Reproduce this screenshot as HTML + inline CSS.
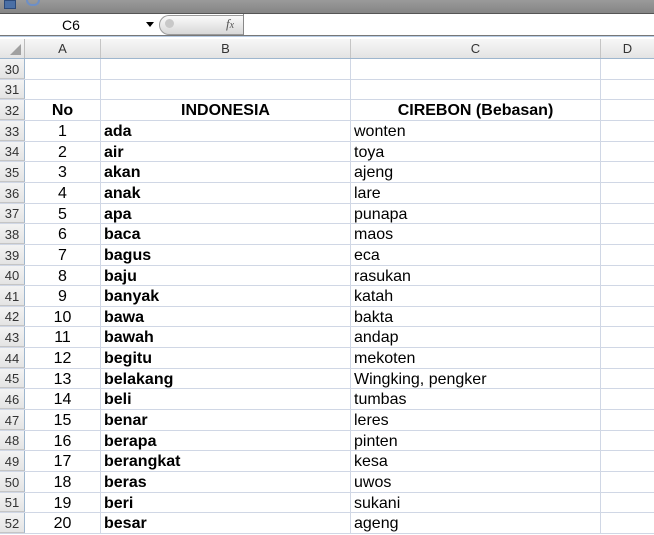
<!DOCTYPE html>
<html><head><style>
*{margin:0;padding:0;box-sizing:border-box}
body{width:654px;height:535px;overflow:hidden;background:#fff;position:relative;font-family:"Liberation Sans",Arial,sans-serif}
.abs{position:absolute}
.row{position:absolute;left:0;width:654px;border-bottom:1px solid #d0d7e5}
.rh{position:absolute;left:0;top:0;bottom:0;width:25px;background:linear-gradient(#f3f3f3,#e4e4e4);border-right:1px solid #9eb6ce;border-bottom:1px solid #c5c5c5;font-size:13px;color:#333;display:flex;align-items:center;justify-content:center;padding-top:1px}
.c{position:absolute;top:0;bottom:0;display:flex;align-items:center;font-size:16px;color:#000;border-right:1px solid #d0d7e5;white-space:nowrap;padding-top:2px}
.a{left:25px;width:76px;justify-content:center}
.b{left:101px;width:250px;padding-left:3px;font-weight:bold}
.cc{left:351px;width:250px;padding-left:3px}
.d{left:601px;width:60px}
</style></head><body>
<div class="abs" style="left:0;top:0;width:654px;height:13px;background:linear-gradient(#9a9a9a,#858585)"></div>
<div class="abs" style="left:4px;top:0;width:12px;height:9px;background:#4a6fa5;border:1px solid #2c4a7a"></div>
<div class="abs" style="left:26px;top:0;width:14px;height:6px;border:2px solid #6d8fc7;border-top:none;border-radius:0 0 6px 6px"></div>
<div class="abs" style="left:0;top:13px;width:654px;height:1px;background:#555"></div>
<div class="abs" style="left:0;top:14px;width:654px;height:21px;background:#fff"></div>
<div class="abs" style="left:0;top:14px;width:158px;height:21px;font-size:14px;display:flex;align-items:center;padding-left:62px">C6</div>
<div class="abs" style="left:146px;top:22px;width:0;height:0;border-left:4px solid transparent;border-right:4px solid transparent;border-top:5px solid #000"></div>
<div class="abs" style="left:159px;top:15px;width:85px;height:20px;border-radius:10px 0 0 10px;background:linear-gradient(#fafafa,#d8d8d8);border:1px solid #9a9a9a;border-right:none"></div>
<div class="abs" style="left:165px;top:19px;width:9px;height:9px;border-radius:50%;background:#c8c8c8"></div>
<div class="abs" style="left:226px;top:16px;font-family:'Liberation Serif',serif;font-style:italic;font-size:13px;color:#555">f<span style="font-size:10px">x</span></div>
<div class="abs" style="left:243px;top:14px;width:1px;height:21px;background:#888"></div>
<div class="abs" style="left:0;top:35px;width:654px;height:1px;background:#777"></div>
<div class="abs" style="left:0;top:36px;width:654px;height:3px;background:#fff;border-top:1px solid #b8cce4"></div>
<div class="abs" style="left:0;top:39px;width:654px;height:20px;background:linear-gradient(#f7f7f7,#e3e3e3);border-bottom:1px solid #9eb6ce;font-size:13px;color:#333">
<div class="abs" style="left:0;top:0;width:25px;height:19px;border-right:1px solid #bbb"></div>
<div class="abs" style="left:10px;top:5px;width:0;height:0;border-left:11px solid transparent;border-bottom:11px solid #a0a0a0"></div>
<div class="abs" style="left:25px;top:0;width:76px;height:19px;border-right:1px solid #c5c5c5;text-align:center;line-height:20px">A</div>
<div class="abs" style="left:101px;top:0;width:250px;height:19px;border-right:1px solid #c5c5c5;text-align:center;line-height:20px">B</div>
<div class="abs" style="left:351px;top:0;width:250px;height:19px;border-right:1px solid #c5c5c5;text-align:center;line-height:20px">C</div>
<div class="abs" style="left:601px;top:0;width:53px;height:19px;text-align:center;line-height:20px">D</div>
</div>
<div class="row" style="top:59px;height:21px"><div class="rh">30</div><div class="c a"></div><div class="c b"></div><div class="c cc"></div></div>
<div class="row" style="top:80px;height:20px"><div class="rh">31</div><div class="c a"></div><div class="c b"></div><div class="c cc"></div></div>
<div class="row" style="top:100px;height:21px"><div class="rh">32</div><div class="c a" style="font-weight:bold">No</div><div class="c b" style="justify-content:center;padding-left:0">INDONESIA</div><div class="c cc" style="justify-content:center;padding-left:0;font-weight:bold">CIREBON (Bebasan)</div></div>
<div class="row" style="top:121px;height:21px"><div class="rh">33</div><div class="c a">1</div><div class="c b">ada</div><div class="c cc">wonten</div></div>
<div class="row" style="top:142px;height:20px"><div class="rh">34</div><div class="c a">2</div><div class="c b">air</div><div class="c cc">toya</div></div>
<div class="row" style="top:162px;height:21px"><div class="rh">35</div><div class="c a">3</div><div class="c b">akan</div><div class="c cc">ajeng</div></div>
<div class="row" style="top:183px;height:21px"><div class="rh">36</div><div class="c a">4</div><div class="c b">anak</div><div class="c cc">lare</div></div>
<div class="row" style="top:204px;height:20px"><div class="rh">37</div><div class="c a">5</div><div class="c b">apa</div><div class="c cc">punapa</div></div>
<div class="row" style="top:224px;height:21px"><div class="rh">38</div><div class="c a">6</div><div class="c b">baca</div><div class="c cc">maos</div></div>
<div class="row" style="top:245px;height:21px"><div class="rh">39</div><div class="c a">7</div><div class="c b">bagus</div><div class="c cc">eca</div></div>
<div class="row" style="top:266px;height:20px"><div class="rh">40</div><div class="c a">8</div><div class="c b">baju</div><div class="c cc">rasukan</div></div>
<div class="row" style="top:286px;height:21px"><div class="rh">41</div><div class="c a">9</div><div class="c b">banyak</div><div class="c cc">katah</div></div>
<div class="row" style="top:307px;height:20px"><div class="rh">42</div><div class="c a">10</div><div class="c b">bawa</div><div class="c cc">bakta</div></div>
<div class="row" style="top:327px;height:21px"><div class="rh">43</div><div class="c a">11</div><div class="c b">bawah</div><div class="c cc">andap</div></div>
<div class="row" style="top:348px;height:21px"><div class="rh">44</div><div class="c a">12</div><div class="c b">begitu</div><div class="c cc">mekoten</div></div>
<div class="row" style="top:369px;height:20px"><div class="rh">45</div><div class="c a">13</div><div class="c b">belakang</div><div class="c cc">Wingking, pengker</div></div>
<div class="row" style="top:389px;height:21px"><div class="rh">46</div><div class="c a">14</div><div class="c b">beli</div><div class="c cc">tumbas</div></div>
<div class="row" style="top:410px;height:21px"><div class="rh">47</div><div class="c a">15</div><div class="c b">benar</div><div class="c cc">leres</div></div>
<div class="row" style="top:431px;height:20px"><div class="rh">48</div><div class="c a">16</div><div class="c b">berapa</div><div class="c cc">pinten</div></div>
<div class="row" style="top:451px;height:21px"><div class="rh">49</div><div class="c a">17</div><div class="c b">berangkat</div><div class="c cc">kesa</div></div>
<div class="row" style="top:472px;height:21px"><div class="rh">50</div><div class="c a">18</div><div class="c b">beras</div><div class="c cc">uwos</div></div>
<div class="row" style="top:493px;height:20px"><div class="rh">51</div><div class="c a">19</div><div class="c b">beri</div><div class="c cc">sukani</div></div>
<div class="row" style="top:513px;height:21px"><div class="rh">52</div><div class="c a">20</div><div class="c b">besar</div><div class="c cc">ageng</div></div>
</body></html>
